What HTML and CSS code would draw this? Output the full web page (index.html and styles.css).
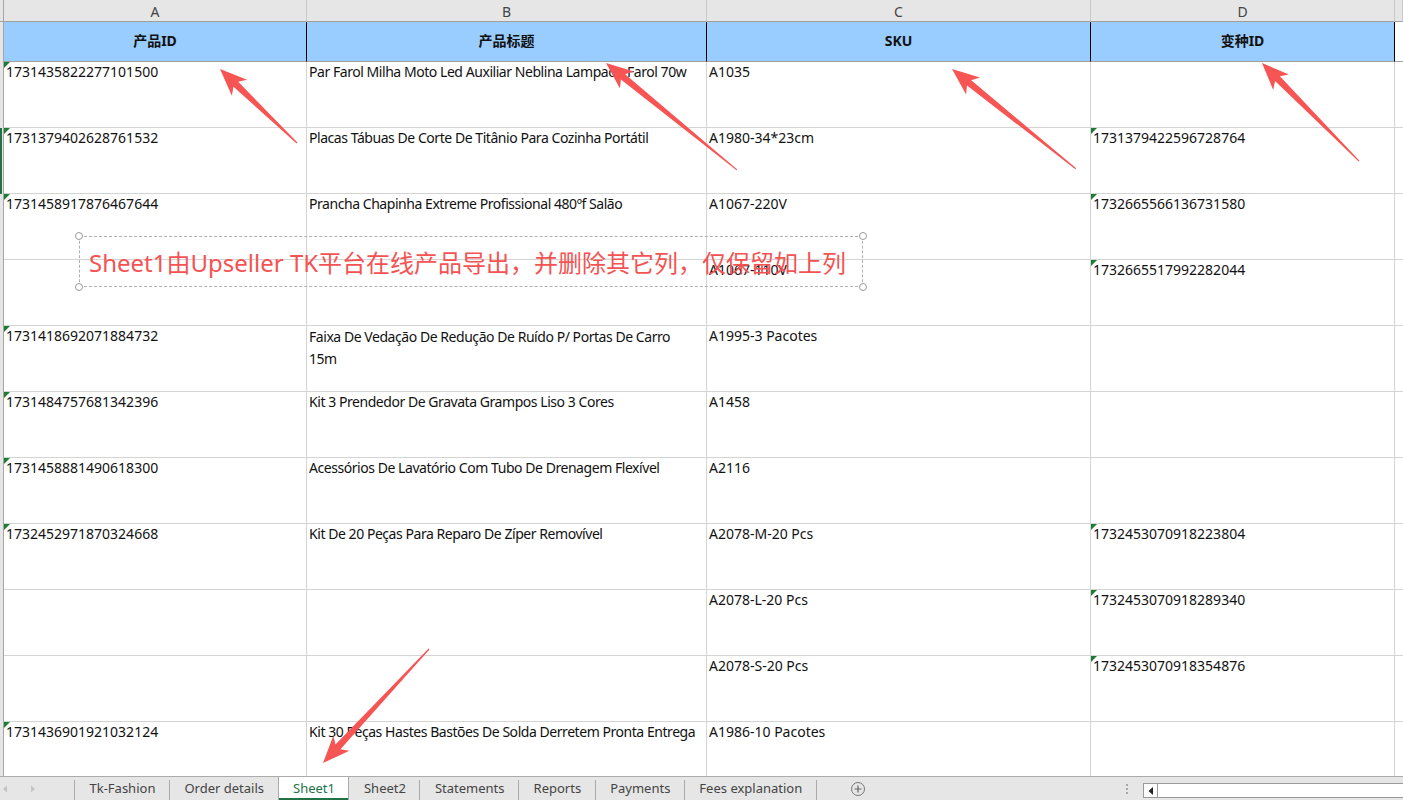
FILE: index.html
```html
<!DOCTYPE html>
<html lang="zh-CN">
<head>
<meta charset="utf-8">
<title>Sheet1</title>
<link rel="stylesheet" href="styles.css">
</head>
<body>
<div class="app">
  <div class="sheet">
    <div class="grid">
      <div class="rh corner"></div>
      <div class="col">A</div><div class="col">B</div><div class="col">C</div><div class="col">D</div><div class="col"></div>

      <div class="rh"></div>
      <div class="hd">产品ID</div><div class="hd">产品标题</div><div class="hd">SKU</div><div class="hd">变种ID</div><div class="hd blank"></div>

      <div class="rh"></div>
      <div class="c t">1731435822277101500</div><div class="c">Par Farol Milha Moto Led Auxiliar Neblina Lampada Farol 70w</div><div class="c">A1035</div><div class="c"></div><div class="c e"></div>

      <div class="rh sel"></div>
      <div class="c t">1731379402628761532</div><div class="c">Placas Tábuas De Corte De Titânio Para Cozinha Portátil</div><div class="c">A1980-34*23cm</div><div class="c t">1731379422596728764</div><div class="c e"></div>

      <div class="rh"></div>
      <div class="c t">1731458917876467644</div><div class="c">Prancha Chapinha Extreme Profissional 480ºf Salão</div><div class="c">A1067-220V</div><div class="c t">1732665566136731580</div><div class="c e"></div>

      <div class="rh"></div>
      <div class="c"></div><div class="c"></div><div class="c">A1067-110V</div><div class="c t">1732665517992282044</div><div class="c e"></div>

      <div class="rh"></div>
      <div class="c t">1731418692071884732</div><div class="c wrap">Faixa De Vedação De Redução De Ruído P/ Portas De Carro<br>15m</div><div class="c">A1995-3 Pacotes</div><div class="c"></div><div class="c e"></div>

      <div class="rh"></div>
      <div class="c t">1731484757681342396</div><div class="c">Kit 3 Prendedor De Gravata Grampos Liso 3 Cores</div><div class="c">A1458</div><div class="c"></div><div class="c e"></div>

      <div class="rh"></div>
      <div class="c t">1731458881490618300</div><div class="c">Acessórios De Lavatório Com Tubo De Drenagem Flexível</div><div class="c">A2116</div><div class="c"></div><div class="c e"></div>

      <div class="rh"></div>
      <div class="c t">1732452971870324668</div><div class="c">Kit De 20 Peças Para Reparo De Zíper Removível</div><div class="c">A2078-M-20 Pcs</div><div class="c t">1732453070918223804</div><div class="c e"></div>

      <div class="rh"></div>
      <div class="c"></div><div class="c"></div><div class="c">A2078-L-20 Pcs</div><div class="c t">1732453070918289340</div><div class="c e"></div>

      <div class="rh"></div>
      <div class="c"></div><div class="c"></div><div class="c">A2078-S-20 Pcs</div><div class="c t">1732453070918354876</div><div class="c e"></div>

      <div class="rh"></div>
      <div class="c t">1731436901921032124</div><div class="c">Kit 30 Peças Hastes Bastões De Solda Derretem Pronta Entrega</div><div class="c">A1986-10 Pacotes</div><div class="c"></div><div class="c e"></div>
    </div>

    <div class="note">
      <span class="handle h-tl"></span><span class="handle h-tr"></span><span class="handle h-bl"></span><span class="handle h-br"></span>
      Sheet1由Upseller TK平台在线产品导出，并删除其它列，仅保留如上列
    </div>
  </div>

  <div class="tabbar">
    <div class="nav">
      <svg width="74" height="23" viewBox="0 0 74 23"><polygon points="3,12 7,8.5 7,15.5" fill="#c4c4c4"/><polygon points="35,12 31,8.5 31,15.5" fill="#c4c4c4"/></svg>
    </div>
    <div class="tab">Tk-Fashion</div>
    <div class="tab">Order details</div>
    <div class="tab active">Sheet1</div>
    <div class="tab">Sheet2</div>
    <div class="tab">Statements</div>
    <div class="tab">Reports</div>
    <div class="tab">Payments</div>
    <div class="tab">Fees explanation</div>
    <div class="add">
      <svg width="16" height="16" viewBox="0 0 16 16"><circle cx="8" cy="8" r="6.5" fill="none" stroke="#777" stroke-width="1"/><path d="M8 4.5V11.5M4.5 8H11.5" stroke="#666" stroke-width="1.2"/></svg>
    </div>
    <div class="dots"><i></i><i></i><i></i></div>
    <div class="hscroll">
      <div class="hbtn"><svg width="8" height="10" viewBox="0 0 8 10"><polygon points="1.5,5 6,1 6,9" fill="#222"/></svg></div>
      <div class="htrack"></div>
    </div>
  </div>

  <svg class="arrows" width="1403" height="800" viewBox="0 0 1403 800">
    <g fill="#f75454">
      <polygon transform="translate(220 69) rotate(43.86)" points="0,0 27,-11 22,-3.4 106.8,-0.6 106.8,0.6 22,3.4 27,11"/>
      <polygon transform="translate(606 63) rotate(39.24)" points="0,0 27,-11 22,-3.4 169,-0.6 169,0.6 22,3.4 27,11"/>
      <polygon transform="translate(952 69) rotate(38.89)" points="0,0 27,-11 22,-3.4 159,-0.6 159,0.6 22,3.4 27,11"/>
      <polygon transform="translate(1262 63) rotate(45.29)" points="0,0 27,-11 22,-3.4 138,-0.6 138,0.6 22,3.4 27,11"/>
      <polygon transform="translate(323 763) rotate(-47.08)" points="0,0 27,-11 22,-3.4 155.7,-0.6 155.7,0.6 22,3.4 27,11"/>
    </g>
  </svg>
</div>
</body>
</html>
```

FILE: styles.css
```css
* { box-sizing: border-box; }
html, body { margin: 0; padding: 0; background: #fff; }
body {
  font-family: "Noto Sans", "Noto Sans CJK SC", sans-serif;
  color: #1a1a1a;
}
.app {
  position: relative;
  width: 1403px;
  height: 800px;
  overflow: hidden;
  display: flex;
  flex-direction: column;
}
.sheet {
  position: relative;
  flex: none;
  height: 776px;
  overflow: hidden;
}
.grid {
  display: grid;
  grid-template-columns: 4px 303px 400px 384px 304px 1fr;
  grid-template-rows: 22px 40px;
  grid-auto-rows: 66px;
}
.rh {
  background: #e6e6e6;
  border-right: 1px solid #a6a6a6;
}
.rh.corner { border-bottom: 1px solid #a0a0a0; }
.rh.sel { box-shadow: inset 2px 0 0 #217346; }
.col {
  background: #e6e6e6;
  border-right: 1px solid #c8c8c8;
  border-bottom: 1px solid #a0a0a0;
  text-align: center;
  font-size: 14px;
  line-height: 20px;
  padding-top: 2px;
  color: #444;
}
.hd {
  background: #99ccff;
  border-right: 1px solid #000;
  border-bottom: 1px solid #a0a0a0;
  font-weight: 700;
  font-size: 14px;
  line-height: 20px;
  padding-bottom: 1px;
  display: flex;
  align-items: center;
  justify-content: center;
  color: #111;
}
.hd.blank { background: #fff; border-right: none; }
.c {
  position: relative;
  border-right: 1px solid #d4d4d4;
  border-bottom: 1px solid #d4d4d4;
  font-size: 14px;
  line-height: 20px;
  padding: 0 2px;
  white-space: nowrap;
  overflow: hidden;
  color: #111;
}
.c:nth-child(6n+3) { letter-spacing: -0.45px; }
.c.wrap { line-height: 22px; }
.c.e { border-right: none; }
.c.t::before {
  content: "";
  position: absolute;
  left: 0;
  top: 0;
  border-top: 6px solid #1e7b34;
  border-right: 6px solid transparent;
}

/* text box overlay */
.note {
  position: absolute;
  left: 79px;
  top: 236px;
  width: 784px;
  height: 51px;
  border: 1px dashed #b0b0b0;
  display: flex;
  align-items: center;
  padding-left: 9px;
  padding-bottom: 1px;
  color: #f55353;
  font-size: 24px;
  white-space: nowrap;
}
.handle {
  position: absolute;
  width: 8px;
  height: 8px;
  border: 1px solid #9a9a9a;
  border-radius: 50%;
  background: #fff;
}
.h-tl { left: -5px; top: -5px; }
.h-tr { right: -5px; top: -5px; }
.h-bl { left: -5px; bottom: -5px; }
.h-br { right: -5px; bottom: -5px; }

/* sheet tabs */
.tabbar {
  flex: none;
  height: 24px;
  display: flex;
  align-items: stretch;
  background: #e6e6e6;
  border-top: 1px solid #ababab;
  font-size: 13px;
  color: #444;
}
.nav {
  position: relative;
  width: 75px;
  flex: none;
}
.nav svg { display: block; }
.nav::after, .tab::after {
  content: "";
  position: absolute;
  right: 0;
  top: 3px;
  bottom: 0;
  width: 1px;
  background: #ababab;
}
.tab {
  position: relative;
  padding: 0 14.5px;
  line-height: 23px;
  white-space: nowrap;
}
.tab.active {
  background: #fff;
  color: #217346;
  margin-left: -1px;
  border-left: 1px solid #ababab;
  box-shadow: inset 0 -2px 0 #217346;
}
.tab.active::after { top: 0; }
.add {
  margin-left: 33px;
  display: flex;
  align-items: center;
}
.add svg { display: block; }
.dots {
  margin-left: auto;
  display: flex;
  flex-direction: column;
  justify-content: center;
  gap: 2px;
  margin-right: 15px;
}
.dots i {
  display: block;
  width: 2px;
  height: 2px;
  background: #a8a8a8;
}
.hscroll {
  width: 260px;
  height: 15px;
  margin-top: 6px;
  display: flex;
  border: 1px solid #9a9a9a;
  border-right: none;
  background: #fff;
}
.hbtn {
  width: 14px;
  border-right: 1px solid #9a9a9a;
  display: flex;
  align-items: center;
  justify-content: center;
}
.hbtn svg { display: block; }
.htrack { flex: 1; }

.arrows {
  position: absolute;
  left: 0;
  top: 0;
  pointer-events: none;
}
```
